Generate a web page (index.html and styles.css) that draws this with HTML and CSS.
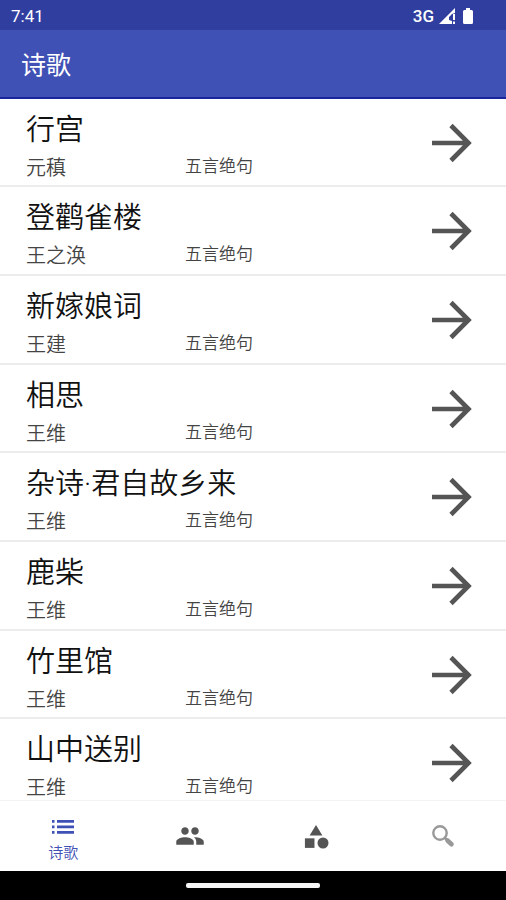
FILE: index.html
```html
<!DOCTYPE html>
<html lang="zh-CN">
<head>
<meta charset="utf-8">
<meta name="viewport" content="width=device-width, initial-scale=1">
<title>诗歌</title>
<link rel="stylesheet" href="styles.css">
</head>
<body>
<svg class="sprite" aria-hidden="true">
  <symbol id="arrow" viewBox="0 0 40 40"><path d="M0 20h35M19 2.500L36.500 20 19 37.500" fill="none" stroke="currentColor" stroke-width="4.600"/></symbol>
</svg>
<div class="app">
  <div class="status">
    <span>7:41</span>
    <div class="status-icons">
      <span>3G</span>
      <svg class="signal" viewBox="0 0 17 16"><path d="M0 16L16 0v5l-3 1-3 3v3l3 1v3z"/><path d="M14 6h2v6h-2zM14 13.500h2V16h-2z"/></svg>
      <svg class="battery" viewBox="0 0 10 16"><path d="M3 0h4v2h1.500Q10 2 10 3.500v11Q10 16 8.500 16h-7Q0 16 0 14.500v-11Q0 2 1.500 2H3z"/></svg>
    </div>
  </div>
  <header class="bar"><h1>诗歌</h1></header>
  <main class="content">
    <ul class="poems">
      <li><a class="poem" href="#p1"><span class="title">行宫</span><span class="author">元稹</span><span class="kind">五言绝句</span><svg class="arrow"><use href="#arrow"/></svg></a></li>
      <li><a class="poem" href="#p2"><span class="title">登鹳雀楼</span><span class="author">王之涣</span><span class="kind">五言绝句</span><svg class="arrow"><use href="#arrow"/></svg></a></li>
      <li><a class="poem" href="#p3"><span class="title">新嫁娘词</span><span class="author">王建</span><span class="kind">五言绝句</span><svg class="arrow"><use href="#arrow"/></svg></a></li>
      <li><a class="poem" href="#p4"><span class="title">相思</span><span class="author">王维</span><span class="kind">五言绝句</span><svg class="arrow"><use href="#arrow"/></svg></a></li>
      <li><a class="poem" href="#p5"><span class="title">杂诗·君自故乡来</span><span class="author">王维</span><span class="kind">五言绝句</span><svg class="arrow"><use href="#arrow"/></svg></a></li>
      <li><a class="poem" href="#p6"><span class="title">鹿柴</span><span class="author">王维</span><span class="kind">五言绝句</span><svg class="arrow"><use href="#arrow"/></svg></a></li>
      <li><a class="poem" href="#p7"><span class="title">竹里馆</span><span class="author">王维</span><span class="kind">五言绝句</span><svg class="arrow"><use href="#arrow"/></svg></a></li>
      <li><a class="poem" href="#p8"><span class="title">山中送别</span><span class="author">王维</span><span class="kind">五言绝句</span><svg class="arrow"><use href="#arrow"/></svg></a></li>
    </ul>
  </main>
  <nav class="tabs">
    <button class="tab active" type="button">
      <svg class="list-icon" viewBox="0 0 22 14"><path d="M0 0h2.500v2.700H0zM5 0h17v2.700H5zM0 5.500h2.500v2.700H0zM5 5.500h17v2.700H5zM0 11h2.500v2.700H0zM5 11h17v2.700H5z"/></svg>
      <span>诗歌</span>
    </button>
    <button class="tab" type="button" aria-label="作者">
      <svg viewBox="0 0 24 24"><path d="M16 11c1.660 0 2.990-1.340 2.990-3S17.660 5 16 5c-1.660 0-3 1.340-3 3s1.340 3 3 3zm-8 0c1.660 0 2.990-1.340 2.990-3S9.660 5 8 5C6.340 5 5 6.340 5 8s1.340 3 3 3zm0 2c-2.330 0-7 1.170-7 3.500V19h14v-2.500c0-2.330-4.670-3.500-7-3.500zm8 0c-.290 0-.620.020-.970.050 1.160.840 1.970 1.970 1.970 3.450V19h6v-2.500c0-2.330-4.670-3.500-7-3.500z"/></svg>
    </button>
    <button class="tab" type="button" aria-label="分类">
      <svg viewBox="0 0 24 24"><path d="M12 2.500l5.500 9h-11z"/><circle cx="18" cy="18" r="4.700"/><path d="M2.500 14h8.200v8.200H2.500z"/></svg>
    </button>
    <button class="tab search" type="button" aria-label="搜索">
      <svg viewBox="0 0 30 30"><circle cx="12" cy="12" r="6.700" fill="none" stroke="currentColor" stroke-width="2.400"/><path d="M17 17l2.500 2.500" stroke="currentColor" stroke-width="2.600"/><path d="M19.500 19.500l4 3.700" stroke="currentColor" stroke-width="4.600" stroke-linecap="round"/></svg>
    </button>
  </nav>
  <div class="system"><span class="handle"></span></div>
</div>
</body>
</html>
```
FILE: styles.css
```css
* { box-sizing: border-box; }
body {
  margin: 0;
  background: #fff;
  color: #111;
  font-family: Roboto, "Noto Sans CJK SC", sans-serif;
}
.sprite { display: none; }
.app { display: flex; flex-direction: column; height: 100vh; }
svg { fill: currentColor; }

.status {
  display: flex;
  justify-content: space-between;
  align-items: center;
  height: 30px;
  padding: 1px 33px 0 11px;
  background: #303f9f;
  color: #fff;
  font-size: 17px;
}
.status-icons { display: flex; align-items: center; gap: 5px; font-weight: 500; }
.signal { width: 17px; height: 16px; }
.battery { width: 10px; height: 16px; margin-left: 2px; }

.bar {
  display: flex;
  align-items: center;
  height: 69px;
  padding: 5px 0 0 21px;
  background: #3f51b5;
  border-bottom: 2px solid #1a249c;
  color: #fff;
}
.bar h1 { margin: 0; font-size: 25px; line-height: 32px; font-weight: 400; }

.content { flex: 1; min-height: 0; overflow: hidden; }
.poems { margin: 0; padding: 0; list-style: none; }
.poem {
  display: grid;
  grid-template-columns: 159px 1fr 40px;
  grid-template-rows: 44px 32px;
  align-items: center;
  padding: 9px 34px 2px 26px;
  border-bottom: 2px solid #ececec;
  color: inherit;
  text-decoration: none;
}
li:nth-child(3n + 1) .poem { padding-bottom: 1px; }
.title { grid-column: 1 / 3; font-size: 29px; line-height: 44px; font-weight: 350; }
.author { font-size: 20px; line-height: 32px; font-weight: 350; color: #444; }
.kind { font-size: 17px; line-height: 28px; padding-bottom: 4px; font-weight: 350; color: #444; }
.arrow { grid-column: 3; grid-row: 1 / 3; align-self: start; width: 40px; height: 40px; margin-top: 15px; color: #555; }

.tabs {
  display: grid;
  grid-template-columns: repeat(4, 1fr);
  height: 71px;
  border-top: 1px solid #f3f3f3;
}
.tab {
  display: flex;
  flex-direction: column;
  align-items: center;
  justify-content: center;
  padding: 0;
  border: 0;
  background: none;
  color: #555;
  font: inherit;
}
.tab svg { width: 30px; height: 30px; }
.tab:nth-child(3) svg { width: 28px; height: 28px; }
.tab.active { gap: 7px; padding-top: 12px; color: #3f51b5; font-size: 15px; line-height: 24px; font-weight: 350; }
.tab .list-icon { width: 22px; height: 14px; }
.tab.search { color: #999; }

.system {
  display: flex;
  align-items: center;
  justify-content: center;
  height: 29px;
  background: #000;
}
.handle { width: 134px; height: 5px; border-radius: 2px; background: #f5f5f5; }
```
